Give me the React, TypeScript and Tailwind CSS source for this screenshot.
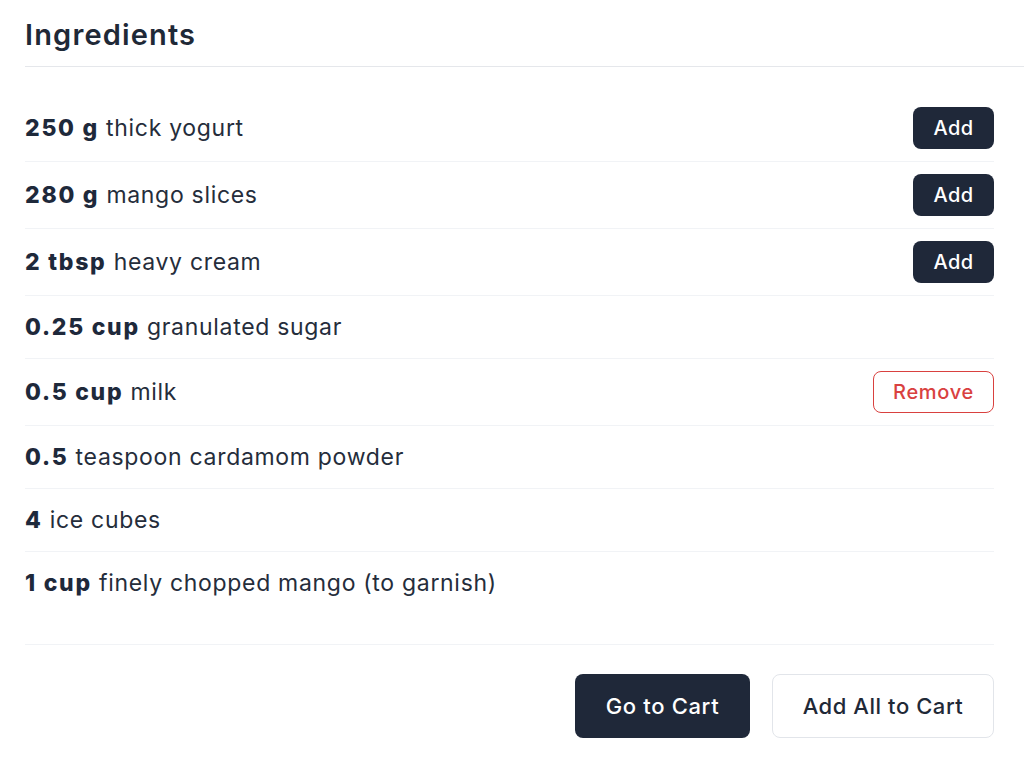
import React from "react";

type Item = { qty: string; name: string; action?: "add" | "remove" };

const items: Item[] = [
  { qty: "250 g", name: "thick yogurt", action: "add" },
  { qty: "280 g", name: "mango slices", action: "add" },
  { qty: "2 tbsp", name: "heavy cream", action: "add" },
  { qty: "0.25 cup", name: "granulated sugar" },
  { qty: "0.5 cup", name: "milk", action: "remove" },
  { qty: "0.5", name: "teaspoon cardamom powder" },
  { qty: "4", name: "ice cubes" },
  { qty: "1 cup", name: "finely chopped mango (to garnish)" },
];

export default function App() {
  return (
    <div
      className="min-h-[765px] w-[1024px] bg-white pl-[25px] text-[#1f2937]"
      style={{ fontFamily: "Inter, 'Noto Sans', sans-serif" }}
    >
      <div className="border-b border-[#e5e7eb] pt-[14px] pb-[10px]">
        <h2 className="text-[29px] font-semibold leading-[42px] tracking-[0.04em] text-[#1f2937]">Ingredients</h2>
      </div>
      <div className="mr-[30px]">
        <ul className="mt-[28px]">
          {items.map((it, i) => (
            <li
              key={i}
              className={
                "flex items-center justify-between " +
                (it.action ? "py-[12px] " : "py-[16px] ") +
                (i < items.length - 1 ? "border-b border-[#f1f3f6]" : "")
              }
            >
              <span className="text-[23px] leading-[30px] tracking-[0.03em] text-[#252d3b]">
                <span className="font-extrabold tracking-[0.075em] text-[#1e293b]">{it.qty}</span> {it.name}
              </span>
              {it.action === "add" && (
                <button className="h-[42px] w-[81px] rounded-[8px] bg-[#1f2839] text-[20px] font-medium tracking-[0.02em] text-white">
                  Add
                </button>
              )}
              {it.action === "remove" && (
                <button className="h-[42px] w-[121px] rounded-[8px] border border-[#d9413f] bg-white text-[20px] font-medium tracking-[0.035em] text-[#d9413f]">
                  Remove
                </button>
              )}
            </li>
          ))}
        </ul>
        <div className="mt-[30px] flex justify-end gap-[22px] border-t border-[#f1f3f6] pt-[29px] pb-[27px]">
          <button className="h-[64px] w-[175px] rounded-[8px] bg-[#1f2839] text-[22px] font-medium tracking-[0.03em] text-white">
            Go to Cart
          </button>
          <button className="h-[64px] w-[222px] rounded-[8px] border border-[#e2e5ea] bg-white text-[22px] font-medium tracking-[0.025em] text-[#1f2937]">
            Add All to Cart
          </button>
        </div>
      </div>
    </div>
  );
}
